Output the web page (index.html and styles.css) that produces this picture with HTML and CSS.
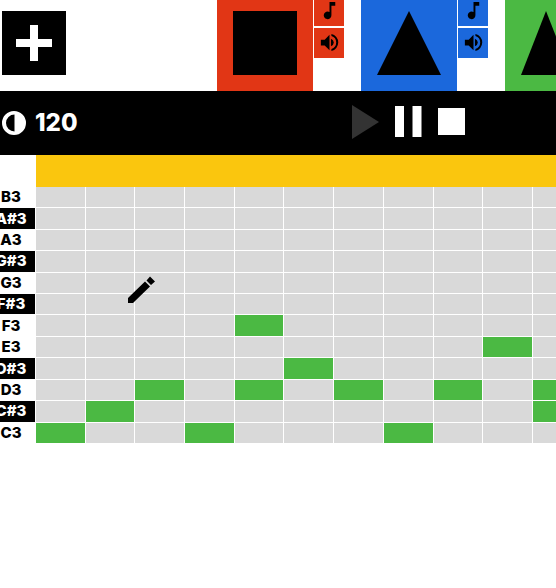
FILE: index.html
```html
<!DOCTYPE html>
<html lang="en">
<head>
<meta charset="utf-8">
<title>Step sequencer</title>
<link rel="stylesheet" href="styles.css">
</head>
<body>
<svg class="symbols" aria-hidden="true">
  <symbol id="note" viewBox="0 0 24 24"><path d="M12 3v10.55A4 4 0 1 0 14 17V7h4V3z"/></symbol>
  <symbol id="volume" viewBox="0 0 24 24"><path d="M3 9v6h4l5 5V4L7 9zM13.500 8v8a4.500 4.500 0 0 0 3-4 4.500 4.500 0 0 0-3-4zM14 3.200v2.100a7 7 0 0 1 0 13.400v2.100a9 9 0 0 0 0-17.600z"/></symbol>
</svg>
<header class="tracks">
  <button class="add" aria-label="Add track"><svg viewBox="0 0 64 64"><path d="M28 14h8v14h14v8H36v14h-8V36H14v-8h14z"/></svg></button>
  <div class="track-list">
    <section class="track red">
      <button class="shape" aria-label="Square track"><svg viewBox="0 0 64 64"><path d="M0 0h64v64H0z"/></svg></button>
      <div class="tools">
        <button class="tool" aria-label="Notes"><svg><use href="#note"/></svg></button>
        <button class="tool" aria-label="Volume"><svg><use href="#volume"/></svg></button>
      </div>
    </section>
    <section class="track blue">
      <button class="shape" aria-label="Triangle track"><svg viewBox="0 0 64 64"><path d="M32 0l32 64H0z"/></svg></button>
      <div class="tools">
        <button class="tool" aria-label="Notes"><svg><use href="#note"/></svg></button>
        <button class="tool" aria-label="Volume"><svg><use href="#volume"/></svg></button>
      </div>
    </section>
    <section class="track green">
      <button class="shape" aria-label="Saw track"><svg viewBox="0 0 64 64"><path d="M25 0l25 64H0z"/></svg></button>
      <div class="tools">
        <button class="tool" aria-label="Notes"><svg><use href="#note"/></svg></button>
        <button class="tool" aria-label="Volume"><svg><use href="#volume"/></svg></button>
      </div>
    </section>
  </div>
</header>
<div class="transport">
  <label class="tempo">
    <svg viewBox="0 0 24 24" role="img" aria-label="Tempo"><path fill-rule="evenodd" d="M12 0a12 12 0 1 0 0 24 12 12 0 0 0 0-24zM12.500 3.500v17a8.500 8.500 0 0 1 0-17z"/></svg>
    <input type="text" inputmode="numeric" value="120">
  </label>
  <div class="playback">
    <button class="play" aria-label="Play"><svg viewBox="0 0 27 34"><path d="M0 0l27 17L0 34z"/></svg></button>
    <button class="pause" aria-label="Pause"><svg viewBox="0 0 27 31"><path d="M0 0h9v31H0zM17.500 0h9v31h-9z"/></svg></button>
    <button class="stop" aria-label="Stop"><svg viewBox="0 0 27 27"><path d="M0 0h27v27H0z"/></svg></button>
  </div>
</div>
<main class="sequencer">
  <div class="timeline"></div>
  <div class="keys">
    <button>B3</button>
    <button class="sharp">A#3</button>
    <button>A3</button>
    <button class="sharp">G#3</button>
    <button>G3</button>
    <button class="sharp">F#3</button>
    <button>F3</button>
    <button>E3</button>
    <button class="sharp">D#3</button>
    <button>D3</button>
    <button class="sharp">C#3</button>
    <button>C3</button>
  </div>
  <div class="steps" id="steps"></div>
  <svg class="pencil" viewBox="0 0 27 27" aria-hidden="true"><path d="M0 22l17-16.500 5 5L5 27H0zM18.500 4.500L22 0.500l5 5L23 9z"/></svg>
</main>
<script src="script.js"></script>
</body>
</html>
```
FILE: styles.css
```css
* {
  box-sizing: border-box;
}

body {
  margin: 0;
  background: #fff;
  color: #000;
  font-family: Inter, "Liberation Sans", sans-serif;
  font-weight: 800;
  overflow: hidden;
}

button {
  display: block;
  margin: 0;
  padding: 0;
  border: 0;
  background: none;
  color: inherit;
  font: inherit;
}

svg {
  display: block;
  fill: currentColor;
}

.symbols {
  display: none;
}

.tracks {
  display: flex;
  align-items: center;
  margin-top: -5px;
  padding-left: 2px;
}

.add {
  flex: none;
  width: 64px;
  background: #000;
  color: #fff;
}

.track-list {
  display: flex;
  gap: 17px;
  margin-left: 151px;
}

.track {
  display: flex;
  flex: none;
  gap: 1px;
}

.red { --tint: #e13615; }
.blue { --tint: #1b68dc; }
.green { --tint: #4bb943; }

.shape {
  width: 96px;
  padding: 16px;
  background: var(--tint);
}

.tools {
  display: flex;
  flex-direction: column;
  gap: 2px;
  padding-top: 1px;
}

.tool {
  display: grid;
  place-items: center;
  width: 30px;
  height: 30px;
  padding: 0 0 1px 1px;
  background: var(--tint);
}

.tool svg {
  width: 23px;
  height: 23px;
}

.transport {
  display: flex;
  align-items: center;
  height: 64px;
  padding-left: 2px;
  background: #000;
  color: #fff;
}

.tempo {
  display: flex;
  align-items: center;
  gap: 9px;
}

.tempo svg {
  width: 24px;
}

.tempo input {
  width: 96px;
  padding: 0;
  border: 0;
  background: none;
  color: inherit;
  font: inherit;
  font-size: 24px;
  line-height: 32px;
}

.playback {
  display: flex;
  align-items: center;
  gap: 16px;
  margin-left: auto;
  padding: 0 91px 3px 0;
}

.playback svg {
  width: 27px;
}

.play {
  color: #333;
}

.sequencer {
  position: relative;
  display: grid;
  grid-template-columns: 48px 794px;
  grid-template-rows: 32px 256px;
  column-gap: 1px;
  margin-left: -13px;
}

.timeline {
  grid-column: 2;
  background: #fac60e;
}

.keys,
.steps {
  display: grid;
  grid-template-rows: repeat(12, minmax(0, 1fr));
  gap: 1px;
}

.keys {
  grid-column: 1;
  font-size: 15px;
  line-height: 20px;
}

.sharp {
  background: #000;
  color: #fff;
}

.steps {
  grid-template-columns: repeat(16, minmax(0, 1fr));
}

.step {
  background: #d9d9d9;
}

.step[aria-pressed="true"] {
  background: #4bb943;
}

.pencil {
  position: absolute;
  top: 121px;
  left: 141px;
  width: 27px;
  pointer-events: none;
}
```
FILE: script.js
```js
const rows = ["B3", "A#3", "A3", "G#3", "G3", "F#3", "F3", "E3", "D#3", "D3", "C#3", "C3"];
const pattern = {
  "F3": [4],
  "E3": [9],
  "D#3": [5],
  "D3": [2, 4, 6, 8, 10],
  "C#3": [1, 10],
  "C3": [0, 3, 7]
};
const steps = document.getElementById("steps");

for (const note of rows) {
  for (let column = 0; column < 16; column++) {
    const step = document.createElement("button");
    step.className = "step";
    step.setAttribute("aria-label", `${note} step ${column + 1}`);
    step.setAttribute("aria-pressed", String((pattern[note] || []).includes(column)));
    step.addEventListener("click", () => {
      step.setAttribute("aria-pressed", String(step.getAttribute("aria-pressed") !== "true"));
    });
    steps.append(step);
  }
}
```
